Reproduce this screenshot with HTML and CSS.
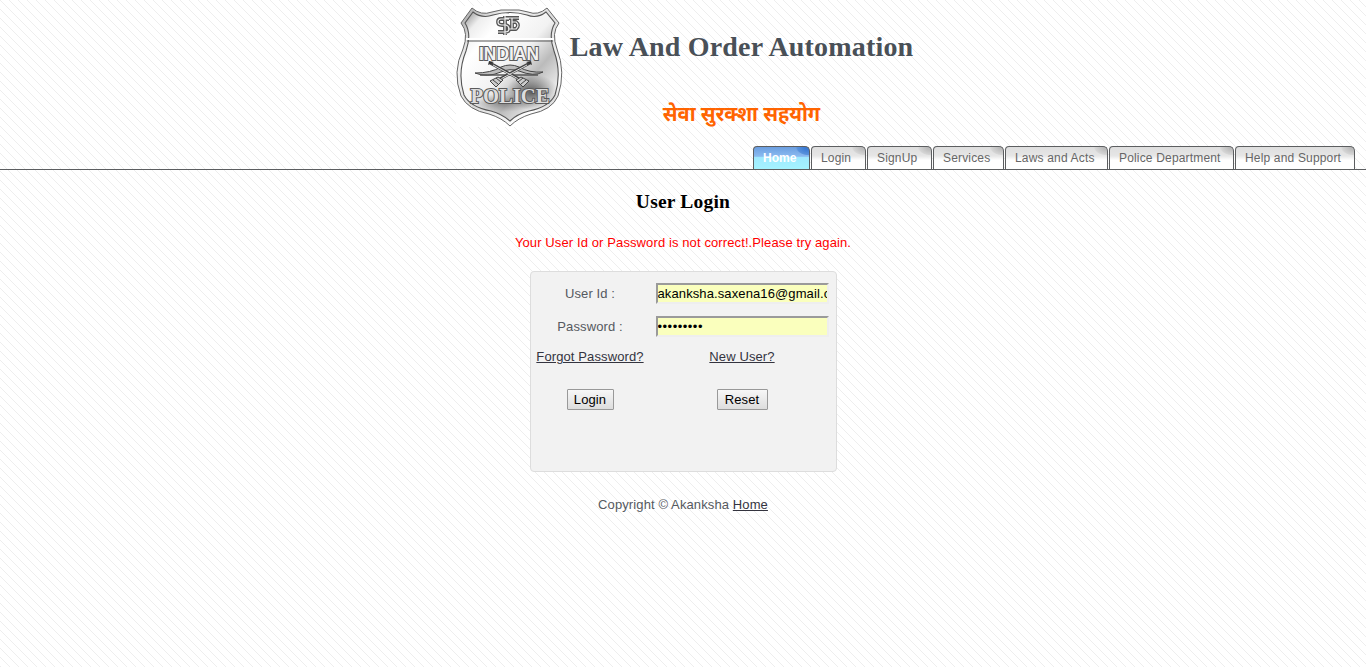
FILE: index.html
```html
<!DOCTYPE html>
<html lang="en">
<head>
<meta charset="utf-8">
<title>Law And Order Automation</title>
<link rel="stylesheet" href="styles.css">
</head>
<body>
<header class="banner">
  <svg class="badge" viewBox="0 0 120 135" role="img" aria-label="Indian Police">
    <defs>
      <linearGradient id="metal" x1="0" y1="0" x2="1" y2="1">
        <stop offset="0" stop-color="#777"/><stop offset=".13" stop-color="#eee"/>
        <stop offset=".25" stop-color="#fff"/><stop offset=".5" stop-color="#f2f2f2"/>
        <stop offset=".66" stop-color="#bbb"/><stop offset=".85" stop-color="#f0f0f0"/>
        <stop offset="1" stop-color="#999"/>
      </linearGradient>
      <linearGradient id="rim" x1="0" y1="0" x2="1" y2="1">
        <stop offset="0" stop-color="#999"/><stop offset=".25" stop-color="#f4f4f4"/>
        <stop offset=".5" stop-color="#ddd"/><stop offset=".8" stop-color="#fff"/><stop offset="1" stop-color="#999"/>
      </linearGradient>
      <radialGradient id="shade"><stop offset="0" stop-color="#333" stop-opacity=".75"/><stop offset="1" stop-color="#555" stop-opacity="0"/></radialGradient>
    </defs>
    <rect x="6" y="6" width="106" height="121" fill="#fff"/>
    <path d="M22 8Q31 16 42 12Q51 9 60 10Q69 9 78 12Q88 16 97 8L109 23Q101 33 107 49Q116 72 108 96Q102 110 81 114Q68 118 60 126Q52 118 39 114Q18 110 11 96Q2 72 13 49Q19 33 11 23Z" fill="url(#rim)" stroke="#666" stroke-width="1"/>
    <path d="M23 12Q32 19 43 15Q60 10 77 15Q87 19 96 12L105 23Q98 34 104 51Q112 73 105 95Q99 107 79 111Q67 114 60 121Q52 114 41 111Q20 107 14 95Q7 73 16 51Q22 34 15 23Z" fill="url(#metal)" stroke="#555" stroke-width="1.1"/>
    <ellipse cx="82" cy="92" rx="26" ry="18" fill="url(#shade)"/>
    <ellipse cx="52" cy="103" rx="34" ry="9" fill="url(#shade)" opacity=".6"/>
    <path d="M16 39H104" stroke="#fff" stroke-width="2"/>
    <path d="M17 41H103" stroke="#555" stroke-width="1.2"/>
    <g fill="none" stroke="#555" stroke-width="3.8" stroke-linejoin="round"><path d="M59 19H51Q48 19 48 22Q48 25 52 25H56Q59 26 59 29Q59 32 55 32H48M55 16V35M55 18H69M62 18V29M62 22H66Q70 25 66 29H58"/></g>
    <path d="M59 19H51Q48 19 48 22Q48 25 52 25H56Q59 26 59 29Q59 32 55 32H48M55 16V35M55 18H69M62 18V29M62 22H66Q70 25 66 29H58" fill="none" stroke="#eee" stroke-width="1.2"/>
    <path d="M25 73Q41 73 51 67Q60 63 69 67Q79 73 93 72Q84 77 69 71Q60 68 51 72Q37 78 25 73Z" fill="#bbb" stroke="#444" stroke-width="1"/>
    <path d="M30 75H88" stroke="#555" stroke-width="1.3"/>
    <path d="M40 63L73 81M80 63L46 81" stroke="#444" stroke-width="2.8"/>
    <path d="M43 65L72 81M77 65L47 81" stroke="#ddd" stroke-width="1"/>
    <path d="M38 65L39 61L44 62ZM82 65L81 61L76 62Z" fill="#333"/>
    <path d="M40 81L48 77L53 80L46 87ZM79 81L71 77L66 80L73 87Z" fill="#ccc" stroke="#444" stroke-width="1"/>
    <path d="M43 80L48 84M46 78L51 82M76 80L71 84M73 78L68 82" stroke="#444"/>
    <text class="badge-top" x="59" y="60" textLength="60" lengthAdjust="spacingAndGlyphs">INDIAN</text>
    <text class="badge-bottom" x="60" y="103" textLength="79" lengthAdjust="spacingAndGlyphs">POLICE</text>
  </svg>
  <div class="titles">
    <h1>Law And Order Automation</h1>
    <p class="motto" lang="hi">सेवा सुरक्शा सहयोग</p>
  </div>
</header>
<nav class="tabs">
  <a class="tab active" href="#">Home</a>
  <a class="tab login" href="#">Login</a>
  <a class="tab signup" href="#">SignUp</a>
  <a class="tab services" href="#">Services</a>
  <a class="tab laws" href="#">Laws and Acts</a>
  <a class="tab police" href="#">Police Department</a>
  <a class="tab help" href="#">Help and Support</a>
</nav>
<main>
  <h2>User Login</h2>
  <p class="error">Your User Id or Password is not correct!.Please try again.</p>
  <form class="panel">
    <label for="user">User Id :</label>
    <input id="user" type="text" value="akanksha.saxena16@gmail.com">
    <label for="pass">Password :</label>
    <input id="pass" type="password" value="password1">
    <a href="#">Forgot Password?</a>
    <a href="#">New User?</a>
    <button class="submit" type="button">Login</button>
    <button class="reset" type="button">Reset</button>
  </form>
</main>
<footer>Copyright © Akanksha <a href="#">Home</a></footer>
</body>
</html>
```
FILE: styles.css
```css
* { box-sizing: border-box; }
body {
  margin: 0;
  min-height: 667px;
  font: 13px/20px "Liberation Sans", Arial, sans-serif;
  letter-spacing: .11px;
  color: #555960;
  background: #fff url("data:image/svg+xml,%3Csvg xmlns='http://www.w3.org/2000/svg' width='9' height='9' shape-rendering='crispEdges'%3E%3Cpath d='M0 0h1v1h1v1h1v1h1v1h1v1h1v1h1v1h1v1h1v1h-1v-1h-1v-1h-1v-1h-1v-1h-1v-1h-1v-1h-1v-1h-1v-1h-1z' fill='%23eee'/%3E%3C/svg%3E");
}
h1, h2, p { margin: 0; }
a { color: #34343f; text-decoration: underline; }
.banner { display: flex; height: 145px; padding-left: 450px; }
.badge { width: 120px; height: 135px; flex: none; }
.badge text { text-anchor: middle; fill: #f2f2f2; stroke: #5a5a5a; stroke-width: 2px; paint-order: stroke; font-weight: bold; letter-spacing: 0; }
.badge .badge-top { font-family: "Liberation Sans", sans-serif; font-size: 18px; }
.badge .badge-bottom { font-family: "Liberation Serif", serif; font-size: 21px; fill: #ddd; }
.titles { width: 343px; display: flex; flex-direction: column; align-items: center; padding-top: 30px; }
h1 { font: bold 28px/34px "Liberation Serif", serif; letter-spacing: .18px; color: #495057; white-space: nowrap; }
.motto { margin-top: 36px; font: bold 20px/28px "Noto Sans", "Noto Sans Devanagari", sans-serif; letter-spacing: 0; color: #ff6400; }
.tabs { display: flex; justify-content: flex-end; gap: 1px; height: 25px; padding: 1px 11px 0 0; border-bottom: 1px solid #5c5e60; }
.tab {
  width: 57px; height: 23px; padding-left: 9px;
  border: 1px solid #5c5e60; border-bottom: 0; border-radius: 4px 5px 0 0;
  background: radial-gradient(ellipse 14px 9px at 100% 0, #bbb 0 30%, #d5d5d5 85%, transparent 95%), linear-gradient(#dedede, #e6e6e6 40%, #fff 60%);
  color: #666; font-size: 12px; line-height: 22px; letter-spacing: .17px; text-decoration: none; white-space: nowrap;
}
.active { background: radial-gradient(ellipse 14px 9px at 100% 0, #3b7bd3 0 30%, #5992dc 85%, transparent 95%), linear-gradient(#6b9ee0, #8abaf0 42%, #9feaff 48%, #a5f3ff); color: #fff; font-weight: bold; letter-spacing: 0; }
.login { width: 55px; }
.signup { width: 65px; }
.services { width: 71px; }
.laws { width: 103px; }
.police { width: 125px; }
.help { width: 120px; }
main { display: flex; flex-direction: column; align-items: center; }
h2 { margin-top: 20px; font: bold 19.5px/24px "Liberation Serif", serif; letter-spacing: .2px; color: #000; }
.error { margin-top: 19px; color: #f00; }
.panel {
  display: grid; grid-template-columns: 119px 173px; grid-template-rows: 33px 33px 28px 56px;
  column-gap: 6px; justify-items: center; align-items: center;
  width: 307px; height: 201px; margin-top: 18px; padding: 5px 0 0; align-content: start;
  border: 1px solid #ddd; border-radius: 4px; background: #f2f2f2;
}
.panel input { width: 173px; height: 21px; padding: 1px 0; border: 2px inset #eee; background: #faffbd; color: #000; font: 13px "Liberation Sans", sans-serif; letter-spacing: .11px; }
.panel input[type="password"] { letter-spacing: .5px; }
.panel button { height: 21px; padding: 0; border: 1px solid #999; border-radius: 1px; background: linear-gradient(#f7f7f7, #ddd); color: #000; font: 13px "Liberation Sans", sans-serif; letter-spacing: .11px; }
.submit { width: 47px; }
.reset { width: 51px; }
footer { margin-top: 23px; text-align: center; }
```
